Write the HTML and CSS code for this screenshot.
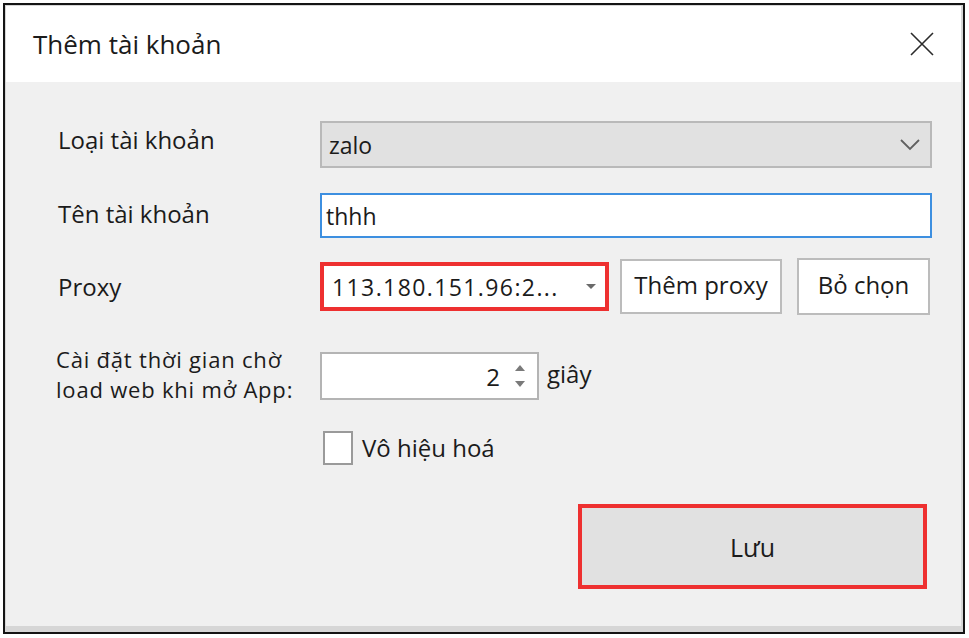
FILE: index.html
```html
<!DOCTYPE html>
<html lang="vi">
<head>
    <meta charset="UTF-8">
    <title>Thêm tài khoản</title>
    <link rel="stylesheet" href="styles.css">
</head>
<body>
    <div class="window">
        <div class="titlebar">
            <span class="title">Thêm tài khoản</span>
            <svg class="close" width="24" height="24" viewBox="0 0 24 24">
                <path d="M1 1 L23 23 M23 1 L1 23" stroke="#2b2b2b" stroke-width="1.6" fill="none"/>
            </svg>
        </div>
        <div class="content">
            <div class="row row-type">
                <div class="label">Loại tài khoản</div>
                <div class="combo">
                    <span>zalo</span>
                    <svg width="20" height="12" viewBox="0 0 20 12">
                        <path d="M1 1 L10 10 L19 1" stroke="#606060" stroke-width="1.8" fill="none"/>
                    </svg>
                </div>
            </div>
            <div class="row row-name">
                <div class="label">Tên tài khoản</div>
                <div class="textbox">thhh</div>
            </div>
            <div class="row row-proxy">
                <div class="label">Proxy</div>
                <div class="proxy-group">
                    <div class="mark proxy-mark">
                        <div class="proxy-combo">
                            <span>113.180.151.96:2...</span>
                            <svg width="10" height="6" viewBox="0 0 10 6">
                                <path d="M0 0 L10 0 L5 5 Z" fill="#6a6a6a"/>
                            </svg>
                        </div>
                    </div>
                    <div class="btn btn-add">Thêm proxy</div>
                    <div class="btn btn-clear">Bỏ chọn</div>
                </div>
            </div>
            <div class="row row-wait">
                <div class="label label-two">Cài đặt thời gian chờ<br>load web khi mở App:</div>
                <div class="wait-group">
                    <div class="spin">
                        <span class="spin-value">2</span>
                        <div class="spin-arrows">
                            <svg width="10" height="6" viewBox="0 0 10 6"><path d="M0 6 L10 6 L5 0 Z" fill="#7a7a7a"/></svg>
                            <svg width="10" height="6" viewBox="0 0 10 6"><path d="M0 0 L10 0 L5 6 Z" fill="#7a7a7a"/></svg>
                        </div>
                    </div>
                    <span class="unit">giây</span>
                </div>
            </div>
            <div class="row row-check">
                <div class="label"></div>
                <div class="check-group">
                    <div class="checkbox"></div>
                    <span>Vô hiệu hoá</span>
                </div>
            </div>
            <div class="save-row">
                <div class="mark save-mark">
                    <div class="save">Lưu</div>
                </div>
            </div>
        </div>
    </div>
</body>
</html>
```

FILE: styles.css
```css
body {
    margin: 0;
    background: #ffffff;
    font-family: "Open Sans", "Noto Sans", sans-serif;
    color: #1b1b1b;
}

.window {
    margin: 3px 0 0 3px;
    width: 955px;
    height: 620px;
    border: 2px solid #141414;
    background: #d6d6d6;
    padding: 1px 2px 6px 1px;
    display: flex;
    flex-direction: column;
}

.titlebar {
    height: 76px;
    background: #ffffff;
    display: flex;
    align-items: center;
    justify-content: space-between;
    padding: 0 27px 0 27px;
    flex-shrink: 0;
}

.title {
    font-size: 26px;
}

.close {
    display: block;
}

.content {
    flex-grow: 1;
    background: #f0f0f0;
    padding: 39px 29px 0 52px;
    display: flex;
    flex-direction: column;
}

.row {
    display: flex;
    align-items: center;
}

.label {
    width: 262px;
    flex-shrink: 0;
    font-size: 24px;
}

.row-type .label {
    padding-bottom: 11px;
}

.row-name .label {
    padding-bottom: 4px;
}

.label-two {
    font-size: 22px;
    letter-spacing: 0.8px;
    line-height: 30px;
    margin-left: -2px;
    width: 264px;
    padding-bottom: 4px;
}

.row-name {
    margin-top: 25px;
}

.row-proxy {
    margin-top: 20px;
}

.row-wait {
    margin-top: 29px;
}

.row-check {
    margin-top: 23px;
}

.combo {
    flex-grow: 1;
    height: 47px;
    box-sizing: border-box;
    background: #e1e1e1;
    border: 2px solid #b9b9b9;
    display: flex;
    align-items: center;
    justify-content: space-between;
    padding: 0 10px 0 7px;
    font-size: 23px;
}

.textbox {
    flex-grow: 1;
    height: 45px;
    box-sizing: border-box;
    background: #ffffff;
    border: 2px solid #3d8fe0;
    display: flex;
    align-items: center;
    padding-left: 4px;
    font-size: 23px;
}

.proxy-group {
    display: flex;
    align-items: center;
}

.mark {
    border: 4px solid #ee3030;
    box-sizing: border-box;
}

.proxy-mark {
    width: 289px;
    height: 49px;
}

.proxy-combo {
    height: 100%;
    background: #ffffff;
    display: flex;
    align-items: center;
    justify-content: space-between;
    padding: 0 9px 0 8px;
    font-size: 23px;
    letter-spacing: 1.4px;
}

.btn {
    height: 55px;
    box-sizing: border-box;
    background: #ffffff;
    border: 2px solid #bcbcbc;
    display: flex;
    align-items: center;
    justify-content: center;
    font-size: 24px;
    padding-bottom: 4px;
}

.btn-add {
    width: 162px;
    margin-left: 11px;
}

.btn-clear {
    width: 133px;
    margin-left: 15px;
    height: 57px;
}

.wait-group {
    display: flex;
    align-items: center;
}

.spin {
    width: 219px;
    height: 48px;
    box-sizing: border-box;
    background: #ffffff;
    border: 2px solid #b4b4b4;
    display: flex;
    align-items: center;
    justify-content: flex-end;
    padding-right: 12px;
}

.spin-value {
    font-size: 24px;
    margin-right: 15px;
}

.spin-arrows {
    display: flex;
    flex-direction: column;
    gap: 10px;
}

.spin-arrows svg {
    display: block;
}

.unit {
    font-size: 24px;
    margin-left: 8px;
    margin-top: -6px;
}

.check-group {
    display: flex;
    align-items: center;
    margin-left: 3px;
}

.checkbox {
    width: 30px;
    height: 34px;
    box-sizing: border-box;
    background: #ffffff;
    border: 2px solid #9a9a9a;
}

.check-group span {
    font-size: 24px;
    margin-left: 9px;
    margin-top: -2px;
}

.save-row {
    display: flex;
    justify-content: flex-end;
    margin-top: 39px;
    padding-right: 5px;
}

.save-mark {
    width: 349px;
    height: 85px;
}

.save {
    height: 100%;
    background: #e1e1e1;
    display: flex;
    align-items: center;
    justify-content: center;
    font-size: 25px;
}
```
